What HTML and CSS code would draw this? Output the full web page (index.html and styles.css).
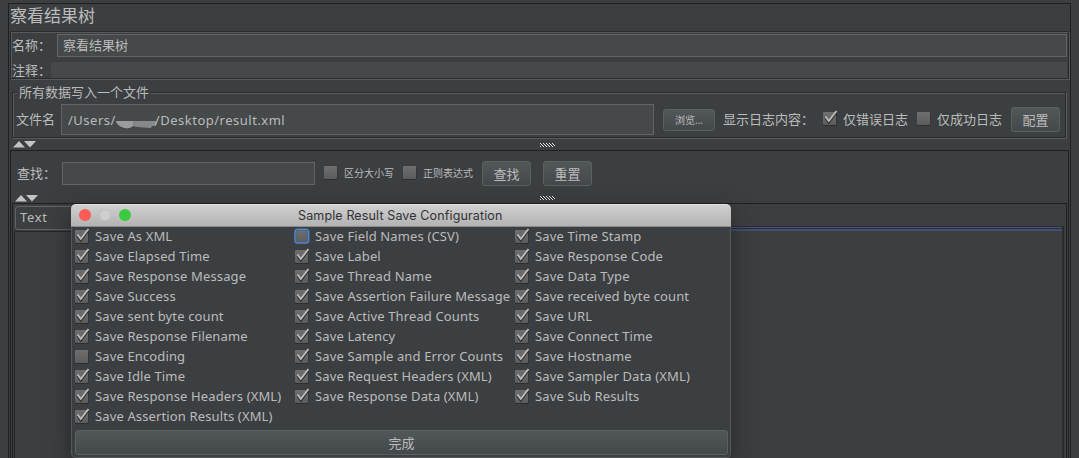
FILE: index.html
```
<!DOCTYPE html>
<html lang="zh-CN">

<head>
    <meta charset="UTF-8">
    <title>察看结果树</title>
    <link rel="stylesheet" href="styles.css">
</head>

<body>

    <svg class="defs" width="0" height="0">
        <defs>
            <linearGradient id="boxFill" x1="0" y1="0" x2="0" y2="1">
                <stop offset="0" stop-color="#6f6f6f"/>
                <stop offset="1" stop-color="#5c5c5c"/>
            </linearGradient>
            <pattern id="dots" width="3" height="4" patternUnits="userSpaceOnUse">
                <path d="M0 0h1v1h-1z M1 1h1v1h-1z M2 2h1v1h-1z M0 3h1v1h-1z" fill="#e6e6e6"/>
            </pattern>
            <symbol id="box" viewBox="0 0 16 16">
                <rect x="1" y="2" width="13.500" height="14" rx="1" fill="#2b2d2e"/>
                <rect x="1" y="2" width="13" height="13" rx="1" fill="url(#boxFill)"/>
            </symbol>
            <symbol id="check" viewBox="0 0 16 16">
                <use href="#box"/>
                <path d="M3.500 8 L6.800 12.500 L14.500 2.500" fill="none" stroke="#2b2b2b" stroke-width="2"/>
                <path d="M3.500 6.500 L6.800 11 L14.500 1" fill="none" stroke="#bcbcbc" stroke-width="1.900"/>
            </symbol>
            <symbol id="focusBox" viewBox="0 0 16 16">
                <rect x="1" y="1.500" width="13.500" height="13.500" rx="2.500" fill="url(#boxFill)" stroke="#3f618f" stroke-width="2.600"/>
                <rect x="1" y="1.500" width="13.500" height="13.500" rx="2.500" fill="none" stroke="#5d8bc9" stroke-width="1"/>
            </symbol>
            <symbol id="arrows" viewBox="0 0 24 7">
                <path d="M0 6.500 L6 0 L12 6.500 Z M11 0 L23 0 L17 6.500 Z" fill="#c3c3c3"/>
            </symbol>
        </defs>
    </svg>

    <main class="window">
        <h1>察看结果树</h1>

        <section class="etched names">
            <div class="row">
                <label>名称：</label>
                <div class="field name">察看结果树</div>
            </div>
            <div class="row comment-row">
                <label>注释：</label>
                <div class="comment"></div>
            </div>
        </section>

        <section class="etched file">
            <span class="legend">所有数据写入一个文件</span>
            <label>文件名</label>
            <div class="field path"><span>/Users/</span><svg class="smudge" viewBox="0 0 40 18"><path d="M0 10 L40 10 L40 15 L36 15 L35 17 L21 16 L17 15 Q12 19 6 16 Q1 14 0 10 Z" fill="#858989"/><path d="M0 10 L17 10 L17 15 Q12 19 6 16 Q1 14 0 10 Z" fill="#999c9d"/></svg><span>/Desktop/result.xml</span></div>
            <button class="small browse">浏览...</button>
            <label class="log">显示日志内容：</label>
            <svg class="cb"><use href="#check"/></svg>
            <label class="errors">仅错误日志</label>
            <svg class="cb"><use href="#box"/></svg>
            <label class="success">仅成功日志</label>
            <button>配置</button>
        </section>

        <div class="splitter">
            <svg class="arrows"><use href="#arrows"/></svg>
            <svg class="grip"><rect width="15" height="4" fill="url(#dots)"/></svg>
        </div>

        <section class="results">
            <div class="search">
                <label>查找：</label>
                <div class="field query"></div>
                <svg class="cb"><use href="#box"/></svg>
                <label class="tiny">区分大小写</label>
                <svg class="cb"><use href="#box"/></svg>
                <label class="tiny">正则表达式</label>
                <button class="find">查找</button>
                <button>重置</button>
            </div>
            <div class="splitter second">
                <svg class="arrows"><use href="#arrows"/></svg>
                <svg class="grip"><rect width="15" height="4" fill="url(#dots)"/></svg>
            </div>
            <div class="panes">
                <div class="left">
                    <div class="combo">Text</div>
                    <div class="tree"></div>
                </div>
                <div class="tabs"></div>
            </div>
        </section>
    </main>

    <div class="dialog">
        <header>
            <i class="dot red"></i><i class="dot gray"></i><i class="dot green"></i>
            <span>Sample Result Save Configuration</span>
        </header>
        <ul>
            <li><svg class="cb"><use href="#check"/></svg>Save As XML</li>
            <li><svg class="cb focus"><use href="#focusBox"/></svg>Save Field Names (CSV)</li>
            <li><svg class="cb"><use href="#check"/></svg>Save Time Stamp</li>
            <li><svg class="cb"><use href="#check"/></svg>Save Elapsed Time</li>
            <li><svg class="cb"><use href="#check"/></svg>Save Label</li>
            <li><svg class="cb"><use href="#check"/></svg>Save Response Code</li>
            <li><svg class="cb"><use href="#check"/></svg>Save Response Message</li>
            <li><svg class="cb"><use href="#check"/></svg>Save Thread Name</li>
            <li><svg class="cb"><use href="#check"/></svg>Save Data Type</li>
            <li><svg class="cb"><use href="#check"/></svg>Save Success</li>
            <li><svg class="cb"><use href="#check"/></svg>Save Assertion Failure Message</li>
            <li><svg class="cb"><use href="#check"/></svg>Save received byte count</li>
            <li><svg class="cb"><use href="#check"/></svg>Save sent byte count</li>
            <li><svg class="cb"><use href="#check"/></svg>Save Active Thread Counts</li>
            <li><svg class="cb"><use href="#check"/></svg>Save URL</li>
            <li><svg class="cb"><use href="#check"/></svg>Save Response Filename</li>
            <li><svg class="cb"><use href="#check"/></svg>Save Latency</li>
            <li><svg class="cb"><use href="#check"/></svg>Save Connect Time</li>
            <li><svg class="cb"><use href="#box"/></svg>Save Encoding</li>
            <li><svg class="cb"><use href="#check"/></svg>Save Sample and Error Counts</li>
            <li><svg class="cb"><use href="#check"/></svg>Save Hostname</li>
            <li><svg class="cb"><use href="#check"/></svg>Save Idle Time</li>
            <li><svg class="cb"><use href="#check"/></svg>Save Request Headers (XML)</li>
            <li><svg class="cb"><use href="#check"/></svg>Save Sampler Data (XML)</li>
            <li><svg class="cb"><use href="#check"/></svg>Save Response Headers (XML)</li>
            <li><svg class="cb"><use href="#check"/></svg>Save Response Data (XML)</li>
            <li><svg class="cb"><use href="#check"/></svg>Save Sub Results</li>
            <li><svg class="cb"><use href="#check"/></svg>Save Assertion Results (XML)</li>
        </ul>
        <button class="done">完成</button>
    </div>

</body>

</html>
```
FILE: styles.css
```
* {
    box-sizing: border-box;
}

body {
    margin: 0;
    height: 458px;
    overflow: hidden;
    background-color: #3c3f41;
    color: #bbbbbb;
    font-family: 'Noto Sans', 'Noto Sans CJK SC', sans-serif;
    font-size: 13px;
    line-height: 18px;
    white-space: nowrap;
}

.defs {
    position: absolute;
}

.window {
    margin: 3px 8px 0;
    height: 455px;
    border: 1px solid #1e2021;
    border-bottom: 0;
    padding: 0 1px;
}

h1 {
    margin: 0;
    height: 27px;
    line-height: 24px;
    font-size: 17px;
    font-weight: normal;
}

.etched {
    border: 1px solid #2a2c2d;
    box-shadow: 1px 1px #565a5b, inset 1px 1px #565a5b;
}

.names {
    height: 48px;
    padding: 2px 1px 0;
}

.row {
    display: flex;
    align-items: center;
    height: 23px;
}

.row label {
    width: 45px;
    padding-bottom: 2px;
}

.field {
    height: 23px;
    border: 1px solid #646464;
    background-color: #45494a;
    padding-left: 5px;
    line-height: 20px;
}

.name {
    flex: 1;
}

.comment-row {
    height: 16px;
    margin-top: 5px;
}

.comment-row label {
    width: 39px;
    padding-bottom: 0;
}

.comment {
    flex: 1;
    height: 16px;
    background-color: #45494a;
}

.file {
    position: relative;
    display: flex;
    align-items: center;
    height: 46px;
    margin: 13px 3px 0 2px;
    padding: 9px 0 0 3px;
}

.file > label {
    padding-bottom: 2px;
}

.file .cb {
    margin-top: -4px;
}

.legend {
    position: absolute;
    left: 4px;
    top: -10px;
    padding: 0 2px;
    background-color: #3c3f41;
}

.path {
    display: flex;
    align-items: center;
    width: 593px;
    height: 31px;
    margin: 0 9px 0 6px;
    padding-left: 6px;
    letter-spacing: 0.5px;
}

.smudge {
    width: 40px;
    height: 18px;
    margin-right: -1px;
}

button {
    width: 49px;
    height: 25px;
    padding: 0;
    border: 1px solid #5b5f60;
    border-radius: 3px;
    background: linear-gradient(#525759, #43484a);
    color: #bbbbbb;
    font: inherit;
    line-height: 20px;
}

.small {
    width: 52px;
    height: 22px;
    font-size: 10px;
}

.log {
    width: 99px;
    margin-left: 8px;
}

.errors {
    width: 73px;
    margin-left: 5px;
}

.success {
    width: 74px;
    margin-left: 5px;
}

.cb {
    width: 16px;
    height: 16px;
    flex: none;
}

.splitter {
    display: flex;
    align-items: center;
    height: 12px;
    padding: 1px 0 0 3px;
}

.arrows {
    width: 24px;
    height: 7px;
}

.grip {
    width: 15px;
    height: 4px;
    margin-left: 503px;
}

.results {
    height: 308px;
    border: 1px solid #1e2021;
    border-bottom: 0;
    padding: 0 1px;
}

.search {
    display: flex;
    align-items: center;
    height: 44px;
    padding: 1px 0 0 5px;
}

.query {
    width: 253px;
    margin-right: 8px;
}

.search > label {
    padding-bottom: 1px;
}

.search > .cb {
    margin-top: -3px;
}

.search > label:first-child {
    width: 45px;
}

.tiny {
    width: 58px;
    margin-left: 5px;
    font-size: 10px;
}

.find {
    margin: 0 12px 0 1px;
}

.second {
    height: 8px;
    padding: 0 0 2px 3px;
}

.second .grip {
    margin-left: 501px;
}

.panes {
    display: flex;
    height: 255px;
    border: 1px solid #1e2021;
    border-bottom: 0;
    padding: 2px 2px 0 1px;
}

.left {
    width: 300px;
}

.combo {
    height: 24px;
    margin-left: 1px;
    border: 1px solid #646464;
    border-radius: 3px;
    padding-left: 4px;
    line-height: 20px;
    letter-spacing: 0.7px;
}

.tree {
    height: 228px;
    margin-top: 1px;
    border: 1px solid #242627;
}

.tabs {
    flex: 1;
    margin-top: 20px;
    border-top: 1px solid #2b2d2e;
    border-right: 2px solid #2b2b2d;
    background: linear-gradient(#46527a 0 1px, #2b2d2e 1px 2px, #434f75 2px 4px, #3c3f41 4px);
}

.dialog {
    position: absolute;
    left: 71px;
    top: 204px;
    width: 660px;
    height: 254px;
    border-radius: 5px;
    background-color: #3c3f41;
    box-shadow: inset 0 0 0 1px #56595b, 0 8px 24px rgba(25, 20, 20, 0.6);
}

.dialog header {
    display: flex;
    align-items: center;
    height: 23px;
    padding-left: 8px;
    border-radius: 5px 5px 0 0;
    border-top: 1px solid #e2e2e2;
    border-bottom: 1px solid #8c8c8c;
    background: linear-gradient(#cfcfd0, #b3b3b4);
    color: #333333;
    font-family: Inter, sans-serif;
    font-size: 12.5px;
    letter-spacing: 0.13px;
}

.dot {
    width: 12px;
    height: 12px;
    margin: -1px 8px 0 0;
    border-radius: 50%;
}

.red {
    background-color: #fb5b55;
}

.gray {
    background-color: #cfcfcf;
    border: 1px solid #c0c0c0;
}

.green {
    background-color: #3bc940;
}

.dialog header span {
    width: 205px;
    margin-left: 159px;
}

ul {
    display: grid;
    grid-template-columns: repeat(3, 220px);
    grid-auto-rows: 20px;
    margin: -1px 0 0;
    padding: 0 0 0 3px;
    list-style-type: none;
}

li {
    display: flex;
    align-items: center;
    letter-spacing: 0.13px;
}

li .cb {
    margin-right: 5px;
}

.focus {
    overflow: visible;
}

.focus use {
    overflow: visible;
}

.done {
    display: block;
    width: 653px;
    margin: 4px 0 0 4px;
    line-height: 22px;
}
```
